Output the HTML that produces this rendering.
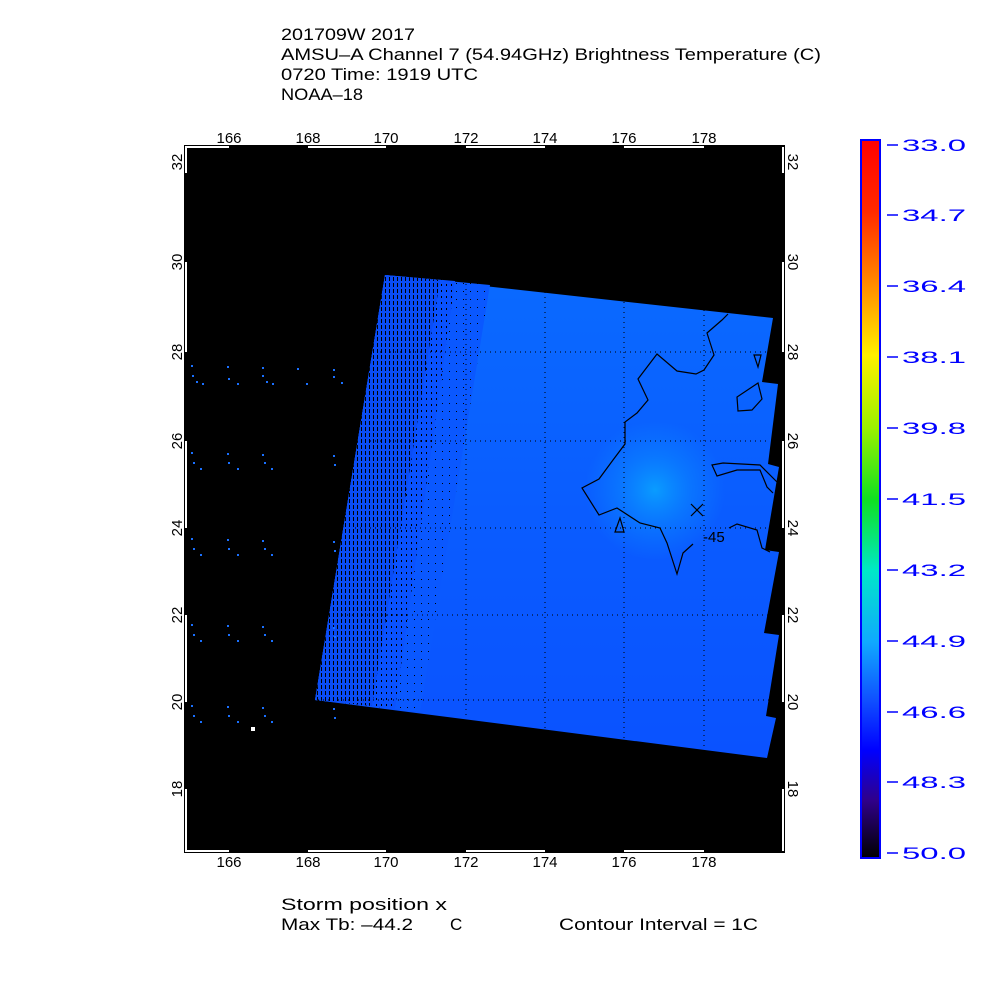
<!DOCTYPE html>
<html><head><meta charset="utf-8"><style>
html,body{margin:0;padding:0;background:#fff;}
svg{display:block;}
text{font-family:"Liberation Sans",sans-serif;white-space:pre;}
</style></head><body>
<svg width="1000" height="1000" viewBox="0 0 1000 1000" xmlns="http://www.w3.org/2000/svg">
<defs>
<linearGradient id="cb" x1="0" y1="0" x2="0" y2="1">
<stop offset="0" stop-color="#ff0000"/>
<stop offset="0.1" stop-color="#ff2a00"/>
<stop offset="0.2" stop-color="#ff8a00"/>
<stop offset="0.3" stop-color="#fff000"/>
<stop offset="0.4" stop-color="#9cf000"/>
<stop offset="0.5" stop-color="#10e020"/>
<stop offset="0.6" stop-color="#00e8c8"/>
<stop offset="0.7" stop-color="#10a8ff"/>
<stop offset="0.78" stop-color="#1050ff"/>
<stop offset="0.85" stop-color="#0000ff"/>
<stop offset="0.92" stop-color="#30008a"/>
<stop offset="1" stop-color="#000000"/>
</linearGradient>
<radialGradient id="hot" cx="655" cy="490" r="70" gradientUnits="userSpaceOnUse">
<stop offset="0" stop-color="#0a9cff"/>
<stop offset="0.5" stop-color="#0a84ff" stop-opacity="0.6"/>
<stop offset="1" stop-color="#0a80ff" stop-opacity="0"/>
</radialGradient>
<linearGradient id="sw" x1="0" y1="0" x2="0" y2="1">
<stop offset="0" stop-color="#0a6aff"/>
<stop offset="0.5" stop-color="#0a5cff"/>
<stop offset="1" stop-color="#0a52ff"/>
</linearGradient>
<pattern id="h1" width="4" height="6" patternUnits="userSpaceOnUse">
<rect width="4" height="6" fill="#0a4cf5"/>
<rect x="1" y="1" width="1" height="4" fill="#000"/>
</pattern>
<pattern id="h2" width="5" height="6" patternUnits="userSpaceOnUse">
<rect width="5" height="6" fill="#0a52ff"/>
<rect x="1" y="2" width="1" height="2" fill="#000"/>
</pattern>
<pattern id="h3" width="7" height="8" patternUnits="userSpaceOnUse">
<rect width="7" height="8" fill="#0a58ff"/>
<rect x="1" y="3" width="1" height="1" fill="#000"/>
</pattern>
</defs>

<text x="281" y="40" font-size="17" textLength="134" lengthAdjust="spacingAndGlyphs">201709W 2017</text>
<text x="281" y="60" font-size="17" textLength="540" lengthAdjust="spacingAndGlyphs">AMSU–A Channel 7 (54.94GHz) Brightness Temperature (C)</text>
<text x="281" y="80" font-size="17" textLength="197" lengthAdjust="spacingAndGlyphs">0720 Time: 1919 UTC</text>
<text x="281" y="100" font-size="17" textLength="82" lengthAdjust="spacingAndGlyphs">NOAA–18</text>

<rect x="185" y="146" width="599" height="706" fill="#000"/>

<polygon points="385,275 773,318 762,382 778,384 768,464 779,467 765,550 779,552 764,633 779,635 766,716 776,718 767,758 315,700" fill="url(#sw)"/>
<polygon points="385,275 773,318 762,382 778,384 768,464 779,467 765,550 779,552 764,633 779,635 766,716 776,718 767,758 315,700" fill="url(#hot)"/>
<polygon points="385,275 490,285 420,712 315,700" fill="url(#h3)"/>
<polygon points="385,275 455,281 395,709 315,700" fill="url(#h2)"/>
<polygon points="385,275 440,280 372,706 315,700" fill="url(#h1)"/>

<g stroke="#000" stroke-width="1" stroke-dasharray="1,4">
<line x1="466" y1="284" x2="466" y2="718"/>
<line x1="545" y1="292" x2="545" y2="728"/>
<line x1="624" y1="302" x2="624" y2="738"/>
<line x1="704" y1="310" x2="704" y2="748"/>
<line x1="380" y1="352" x2="770" y2="352"/>
<line x1="370" y1="441" x2="770" y2="441"/>
<line x1="355" y1="528" x2="770" y2="528"/>
<line x1="342" y1="615" x2="770" y2="615"/>
<line x1="318" y1="700" x2="770" y2="700"/>
</g>

<g fill="none" stroke="#000" stroke-width="1.2">
<polyline points="728,314 722,320 707,333 714,355 704,370 696,374 677,371 657,354 638,379 648,400 637,413 625,422 625,444 613,460 599,479 582,488 599,515 617,508 640,523 660,528 667,543 677,574 683,553 693,544"/>
<polyline points="729,528 737,524 757,530 762,548 770,552"/>
<polygon points="620,518 615,532 624,532"/>
<polygon points="754,355 761,355 758,367"/>
<polygon points="758,383 737,397 738,411 752,410 762,399"/>
<polyline points="773,493 767,487 760,470 737,470 717,476 712,465 723,463 760,465 778,483"/>
<line x1="691" y1="504" x2="703" y2="516"/>
<line x1="703" y1="504" x2="691" y2="516"/>
</g>
<text x="703" y="542" font-size="15" fill="#000">-45</text>

<g fill="#1a70ff">
<rect x="191" y="365" width="2" height="2"/><rect x="192" y="375" width="2" height="2"/><rect x="196" y="381" width="2" height="2"/><rect x="202" y="383" width="2" height="2"/>
<rect x="227" y="366" width="2" height="2"/><rect x="228" y="378" width="2" height="2"/><rect x="237" y="383" width="2" height="2"/>
<rect x="262" y="367" width="2" height="2"/><rect x="262" y="375" width="2" height="2"/><rect x="266" y="381" width="2" height="2"/><rect x="272" y="383" width="2" height="2"/>
<rect x="297" y="368" width="2" height="2"/><rect x="306" y="383" width="2" height="2"/>
<rect x="333" y="369" width="2" height="2"/><rect x="333" y="376" width="2" height="2"/><rect x="341" y="382" width="2" height="2"/>
<g id="dg">
<rect x="191" y="452" width="2" height="2"/><rect x="193" y="462" width="2" height="2"/><rect x="200" y="468" width="2" height="2"/>
<rect x="227" y="453" width="2" height="2"/><rect x="228" y="462" width="2" height="2"/><rect x="237" y="468" width="2" height="2"/>
<rect x="262" y="454" width="2" height="2"/><rect x="264" y="462" width="2" height="2"/><rect x="271" y="468" width="2" height="2"/>
<rect x="333" y="455" width="2" height="2"/><rect x="334" y="464" width="2" height="2"/>
</g>
<use href="#dg" y="86"/><use href="#dg" y="172"/><use href="#dg" y="253"/>
</g>
<rect x="251" y="727" width="4" height="4" fill="#fff"/>

<g stroke="#fff" stroke-width="2" fill="none">
<line x1="185" y1="147" x2="229" y2="147"/><line x1="308" y1="147" x2="386" y2="147"/><line x1="466" y1="147" x2="545" y2="147"/><line x1="624" y1="147" x2="704" y2="147"/>
<line x1="185" y1="851" x2="229" y2="851"/><line x1="308" y1="851" x2="386" y2="851"/><line x1="466" y1="851" x2="545" y2="851"/><line x1="624" y1="851" x2="704" y2="851"/>
<line x1="186" y1="147" x2="186" y2="173"/><line x1="186" y1="262" x2="186" y2="352"/><line x1="186" y1="441" x2="186" y2="528"/><line x1="186" y1="615" x2="186" y2="702"/><line x1="186" y1="789" x2="186" y2="851"/>
<line x1="783" y1="147" x2="783" y2="173"/><line x1="783" y1="262" x2="783" y2="352"/><line x1="783" y1="441" x2="783" y2="528"/><line x1="783" y1="615" x2="783" y2="702"/><line x1="783" y1="789" x2="783" y2="851"/>
</g>
<g stroke="#000" stroke-width="1">
<line x1="184.5" y1="146" x2="184.5" y2="853"/><line x1="784.5" y1="146" x2="784.5" y2="853"/>
<line x1="184" y1="852.5" x2="785" y2="852.5"/><line x1="184" y1="145.5" x2="785" y2="145.5"/>
</g>

<g font-size="15" text-anchor="middle">
<text x="229" y="143">166</text><text x="308" y="143">168</text><text x="386" y="143">170</text><text x="466" y="143">172</text><text x="545" y="143">174</text><text x="624" y="143">176</text><text x="704" y="143">178</text>
<text x="229" y="867">166</text><text x="308" y="867">168</text><text x="386" y="867">170</text><text x="466" y="867">172</text><text x="545" y="867">174</text><text x="624" y="867">176</text><text x="704" y="867">178</text>
</g>
<g font-size="15" text-anchor="middle">
<text transform="translate(182,162) rotate(-90)">32</text>
<text transform="translate(182,262) rotate(-90)">30</text>
<text transform="translate(182,352) rotate(-90)">28</text>
<text transform="translate(182,441) rotate(-90)">26</text>
<text transform="translate(182,528) rotate(-90)">24</text>
<text transform="translate(182,615) rotate(-90)">22</text>
<text transform="translate(182,702) rotate(-90)">20</text>
<text transform="translate(182,789) rotate(-90)">18</text>
<text transform="translate(788,162) rotate(90)">32</text>
<text transform="translate(788,262) rotate(90)">30</text>
<text transform="translate(788,352) rotate(90)">28</text>
<text transform="translate(788,441) rotate(90)">26</text>
<text transform="translate(788,528) rotate(90)">24</text>
<text transform="translate(788,615) rotate(90)">22</text>
<text transform="translate(788,702) rotate(90)">20</text>
<text transform="translate(788,789) rotate(90)">18</text>
</g>

<rect x="861" y="140" width="19" height="718" fill="url(#cb)" stroke="#0000ff" stroke-width="2"/>
<g stroke="#0000ff" stroke-width="1.5">
<line x1="887" y1="145" x2="898" y2="145"/><line x1="887" y1="215" x2="898" y2="215"/><line x1="887" y1="286" x2="898" y2="286"/><line x1="887" y1="357" x2="898" y2="357"/><line x1="887" y1="428" x2="898" y2="428"/><line x1="887" y1="499" x2="898" y2="499"/><line x1="887" y1="570" x2="898" y2="570"/><line x1="887" y1="641" x2="898" y2="641"/><line x1="887" y1="712" x2="898" y2="712"/><line x1="887" y1="782" x2="898" y2="782"/><line x1="887" y1="853" x2="898" y2="853"/>
</g>
<g font-size="17" fill="#0000ff">
<text x="902" y="151" textLength="64" lengthAdjust="spacingAndGlyphs">33.0</text>
<text x="902" y="221" textLength="64" lengthAdjust="spacingAndGlyphs">34.7</text>
<text x="902" y="292" textLength="64" lengthAdjust="spacingAndGlyphs">36.4</text>
<text x="902" y="363" textLength="64" lengthAdjust="spacingAndGlyphs">38.1</text>
<text x="902" y="434" textLength="64" lengthAdjust="spacingAndGlyphs">39.8</text>
<text x="902" y="505" textLength="64" lengthAdjust="spacingAndGlyphs">41.5</text>
<text x="902" y="576" textLength="64" lengthAdjust="spacingAndGlyphs">43.2</text>
<text x="902" y="647" textLength="64" lengthAdjust="spacingAndGlyphs">44.9</text>
<text x="902" y="718" textLength="64" lengthAdjust="spacingAndGlyphs">46.6</text>
<text x="902" y="788" textLength="64" lengthAdjust="spacingAndGlyphs">48.3</text>
<text x="902" y="859" textLength="64" lengthAdjust="spacingAndGlyphs">50.0</text>
</g>

<text x="281" y="910" font-size="17" textLength="166" lengthAdjust="spacingAndGlyphs">Storm position x</text>
<text x="281" y="930" font-size="17" textLength="132" lengthAdjust="spacingAndGlyphs">Max Tb: –44.2</text>
<text x="450" y="930" font-size="17">C</text>
<text x="559" y="930" font-size="17" textLength="199" lengthAdjust="spacingAndGlyphs">Contour Interval = 1C</text>
</svg>
</body></html>
